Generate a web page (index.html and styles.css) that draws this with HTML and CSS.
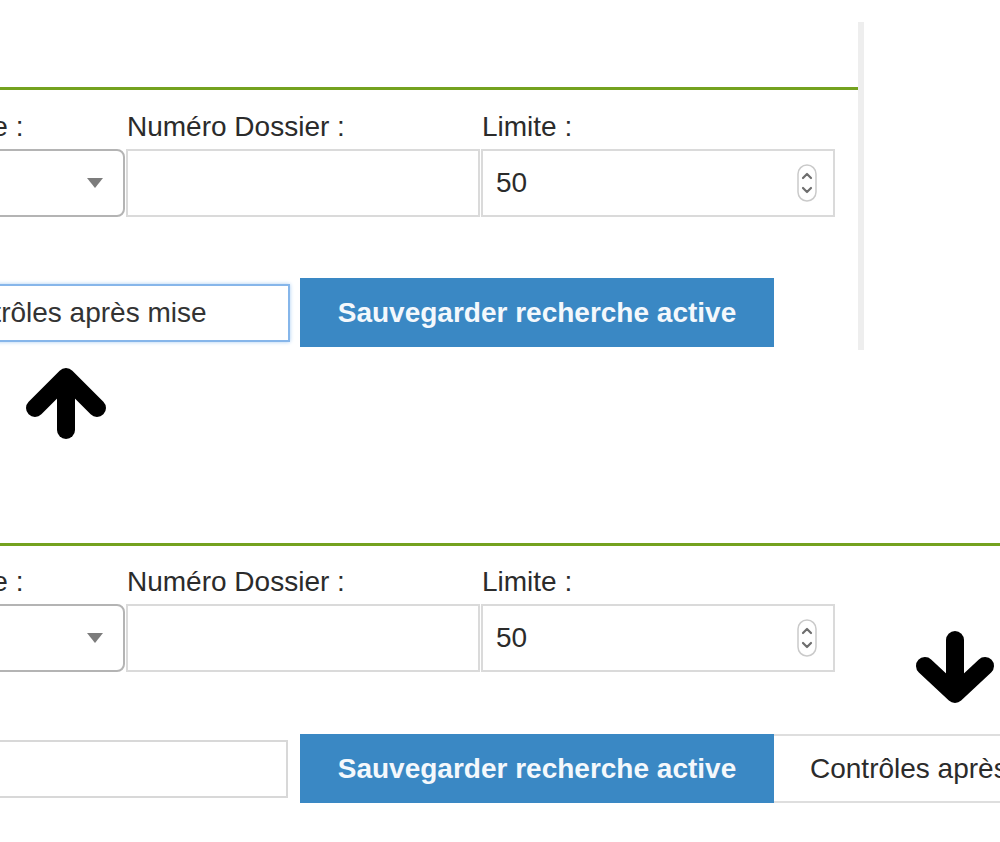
FILE: index.html
```html
<!DOCTYPE html>
<html lang="fr">
<head>
<meta charset="utf-8">
<title>Recherche</title>
<link rel="stylesheet" href="styles.css">
</head>
<body>
<div class="shot shot-top">
  <div class="panel panel-top">
    <div class="panel-head"></div>
    <div class="fields">
      <div class="field">
        <label class="lbl">Catégorie de visite :</label>
        <div class="select"><span class="caret"></span></div>
      </div>
      <div class="field">
        <label class="lbl">Numéro Dossier :</label>
        <div class="box"></div>
      </div>
      <div class="field">
        <label class="lbl">Limite :</label>
        <div class="box num">
          <span class="val">50</span>
          <svg class="spin" width="20" height="38" viewBox="0 0 20 38"><rect x="1" y="1" width="18" height="36" rx="9" fill="#fff" stroke="#cacaca" stroke-width="1.5"/><polyline points="6,14 10,10 14,14" fill="none" stroke="#6e6e6e" stroke-width="2.2" stroke-linecap="round" stroke-linejoin="round"/><polyline points="6,24 10,28 14,24" fill="none" stroke="#6e6e6e" stroke-width="2.2" stroke-linecap="round" stroke-linejoin="round"/></svg>
        </div>
      </div>
    </div>
    <div class="actions">
      <div class="text-in focused">Contrôles après mise</div>
      <button class="btn">Sauvegarder recherche active</button>
    </div>
  </div>
  <svg class="arrow arrow-up" width="80" height="75" viewBox="0 0 80 75"><line x1="40" y1="16" x2="40" y2="66" stroke="#000" stroke-width="18" stroke-linecap="round"/><polyline points="9,44 40,13 71,44" fill="none" stroke="#000" stroke-width="18" stroke-linecap="round" stroke-linejoin="round"/></svg>
</div>

<div class="shot shot-bottom">
  <div class="panel panel-bottom">
    <div class="panel-head"></div>
    <div class="fields">
      <div class="field">
        <label class="lbl">Catégorie de visite :</label>
        <div class="select"><span class="caret"></span></div>
      </div>
      <div class="field">
        <label class="lbl">Numéro Dossier :</label>
        <div class="box"></div>
      </div>
      <div class="field">
        <label class="lbl">Limite :</label>
        <div class="box num">
          <span class="val">50</span>
          <svg class="spin" width="20" height="38" viewBox="0 0 20 38"><rect x="1" y="1" width="18" height="36" rx="9" fill="#fff" stroke="#cacaca" stroke-width="1.5"/><polyline points="6,14 10,10 14,14" fill="none" stroke="#6e6e6e" stroke-width="2.2" stroke-linecap="round" stroke-linejoin="round"/><polyline points="6,24 10,28 14,24" fill="none" stroke="#6e6e6e" stroke-width="2.2" stroke-linecap="round" stroke-linejoin="round"/></svg>
        </div>
      </div>
    </div>
    <div class="actions">
      <div class="text-in plain"></div>
      <button class="btn">Sauvegarder recherche active</button>
      <div class="option">Contrôles après mise</div>
    </div>
  </div>
  <svg class="arrow arrow-down" width="80" height="75" viewBox="0 0 80 75"><line x1="40" y1="9" x2="40" y2="59" stroke="#000" stroke-width="18" stroke-linecap="round"/><polyline points="10,35 40,63 70,35" fill="none" stroke="#000" stroke-width="18" stroke-linecap="round" stroke-linejoin="round"/></svg>
</div>
</body>
</html>
```

FILE: styles.css
```css
html, body {
  margin: 0;
  padding: 0;
  background: #fff;
}
body {
  width: 1000px;
  height: 842px;
  overflow: hidden;
  font-family: "Liberation Sans", Arial, Helvetica, sans-serif;
  color: #333;
}
.shot {
  position: relative;
}
.shot-top {
  padding-top: 22px;
}
.shot-bottom {
  margin-top: 39px;
}
.panel-top {
  width: 858px;
  border-right: 6px solid #eeeeee;
  padding-bottom: 3px;
}
.panel-bottom {
  width: 1000px;
}
.panel-head {
  height: 65px;
  border-bottom: 3px solid #74a21f;
}
.fields {
  display: flex;
  gap: 1px;
  margin-left: -229px;
  margin-top: 21px;
}
.panel-bottom .fields {
  margin-top: 20px;
}
.field {
  width: 354px;
  flex: none;
  display: flex;
  flex-direction: column;
}
.lbl {
  display: block;
  font-size: 28px;
  line-height: 32px;
  height: 32px;
  padding-left: 5px;
  margin-bottom: 6px;
  white-space: nowrap;
  color: #2b2b2b;
}
.field + .field .lbl {
  padding-left: 1px;
}
.select {
  height: 68px;
  box-sizing: border-box;
  border: 2px solid #b4b4b4;
  border-radius: 8px;
  background: #fff;
  display: flex;
  align-items: center;
  justify-content: flex-end;
  padding-right: 20px;
}
.caret {
  width: 0;
  height: 0;
  border-left: 8px solid transparent;
  border-right: 8px solid transparent;
  border-top: 10px solid #7c7c7c;
}
.box {
  height: 68px;
  box-sizing: border-box;
  border: 2px solid #dadada;
  background: #fff;
}
.num {
  display: flex;
  align-items: center;
  justify-content: space-between;
  padding: 0 16px 0 13px;
}
.val {
  font-size: 28px;
  color: #2b2b2b;
}
.spin {
  display: block;
}
.actions {
  display: flex;
  align-items: center;
  margin-top: 61px;
  margin-left: -90px;
}
.panel-bottom .actions {
  margin-top: 62px;
}
.text-in {
  width: 380px;
  height: 58px;
  box-sizing: border-box;
  background: #fff;
  font-size: 28px;
  line-height: 54px;
  padding-left: 30px;
  color: #333;
  white-space: nowrap;
  flex: none;
}
.focused {
  border: 2px solid #86b6ea;
  box-shadow: 0 0 4px #a9cdf3;
}
.plain {
  width: 378px;
  border: 2px solid #d8d8d8;
}
.btn {
  margin-left: 10px;
  width: 474px;
  height: 69px;
  flex: none;
  border: none;
  background: #3a88c4;
  color: #f4f8fc;
  font-family: "Liberation Sans", Arial, Helvetica, sans-serif;
  font-weight: bold;
  font-size: 28px;
  padding: 0;
  cursor: pointer;
}
.plain + .btn {
  margin-left: 12px;
}
.option {
  height: 69px;
  box-sizing: border-box;
  width: 260px;
  flex: none;
  border: 2px solid #dedede;
  border-left: none;
  font-size: 28px;
  line-height: 65px;
  padding-left: 36px;
  white-space: nowrap;
  color: #2b2b2b;
  background: #fff;
}
.arrow {
  display: block;
}
.arrow-up {
  margin: 14px 0 0 26px;
}
.arrow-down {
  position: absolute;
  left: 915px;
  top: 153px;
}
```
